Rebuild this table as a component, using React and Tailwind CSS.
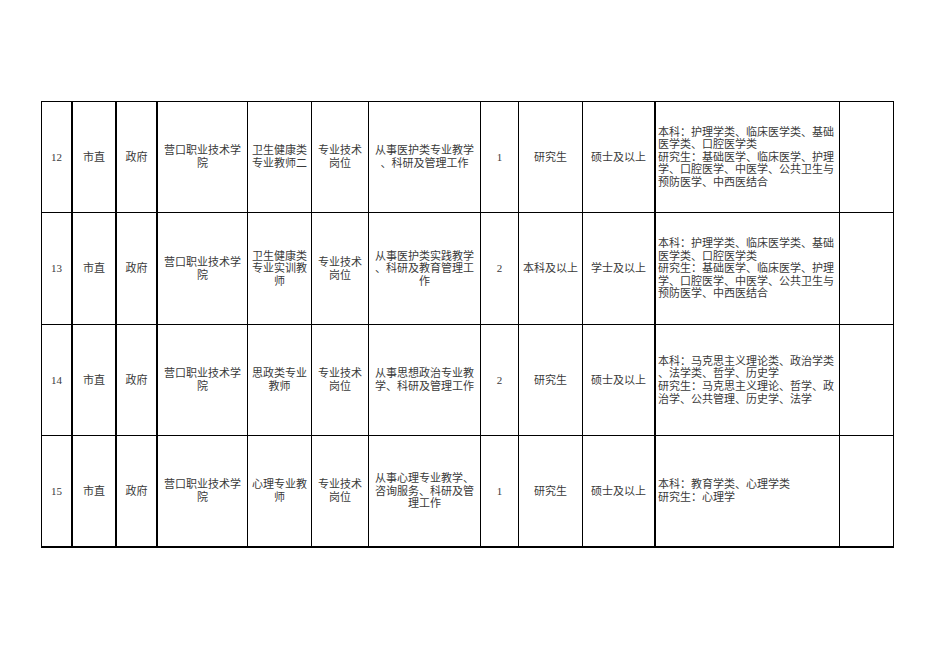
import React from 'react';

const rows = [
  {
    no: '12',
    num: '1',
    cols: [
      ['卫生健康类', '专业教师二'],
      ['从事医护类专业教学', '、科研及管理工作'],
    ],
    edu: ['研究生'],
    deg: ['硕士及以上'],
    major: [
      '本科：护理学类、临床医学类、基础',
      '医学类、口腔医学类',
      '研究生：基础医学、临床医学、护理',
      '学、口腔医学、中医学、公共卫生与',
      '预防医学、中西医结合',
    ],
  },
  {
    no: '13',
    num: '2',
    cols: [
      ['卫生健康类', '专业实训教', '师'],
      ['从事医护类实践教学', '、科研及教育管理工', '作'],
    ],
    edu: ['本科及以上'],
    deg: ['学士及以上'],
    major: [
      '本科：护理学类、临床医学类、基础',
      '医学类、口腔医学类',
      '研究生：基础医学、临床医学、护理',
      '学、口腔医学、中医学、公共卫生与',
      '预防医学、中西医结合',
    ],
  },
  {
    no: '14',
    num: '2',
    cols: [
      ['思政类专业', '教师'],
      ['从事思想政治专业教', '学、科研及管理工作'],
    ],
    edu: ['研究生'],
    deg: ['硕士及以上'],
    major: [
      '本科：马克思主义理论类、政治学类',
      '、法学类、哲学、历史学',
      '研究生：马克思主义理论、哲学、政',
      '治学、公共管理、历史学、法学',
    ],
  },
  {
    no: '15',
    num: '1',
    cols: [
      ['心理专业教', '师'],
      ['从事心理专业教学、', '咨询服务、科研及管', '理工作'],
    ],
    edu: ['研究生'],
    deg: ['硕士及以上'],
    major: ['本科：教育学类、心理学类', '研究生：心理学'],
  },
];

function Lines({ lines }) {
  return lines.map((l, i) => (
    <div key={i} className="whitespace-nowrap">
      {l}
    </div>
  ));
}

function Cell({ children, thick, left, last }) {
  return (
    <div
      className={
        'flex flex-col justify-center border-black ' +
        (thick ? 'border-r-2 ' : 'border-r ') +
        (last ? 'border-b-2 ' : 'border-b ') +
        (left ? 'items-start pl-[2px] text-left' : 'items-center text-center')
      }
    >
      {children}
    </div>
  );
}

export default function App() {
  return (
    <div
      className="w-[936px] h-[662px] bg-white pl-[41px] pt-[101px] text-[11px] leading-[12.6px] text-[#3a3a3a]"
      style={{ fontFamily: '"Liberation Serif", "Noto Sans CJK SC", serif' }}
    >
      <div className="grid w-[853px] grid-cols-[31px_44px_41px_90px_64px_57px_112px_38px_64px_73px_184px_54px] grid-rows-[111px_112px_111px_112px] border-l border-t border-black">
        {rows.map((r, i) => {
          const last = i === rows.length - 1;
          return (
            <React.Fragment key={r.no}>
              <Cell thick last={last}>{r.no}</Cell>
              <Cell thick last={last}>市直</Cell>
              <Cell thick last={last}>政府</Cell>
              <Cell last={last}>
                <Lines lines={['营口职业技术学', '院']} />
              </Cell>
              <Cell last={last}>
                <Lines lines={r.cols[0]} />
              </Cell>
              <Cell last={last}>
                <Lines lines={['专业技术', '岗位']} />
              </Cell>
              <Cell last={last}>
                <Lines lines={r.cols[1]} />
              </Cell>
              <Cell last={last}>{r.num}</Cell>
              <Cell last={last}>
                <Lines lines={r.edu} />
              </Cell>
              <Cell thick last={last}>
                <Lines lines={r.deg} />
              </Cell>
              <Cell left last={last}>
                <Lines lines={r.major} />
              </Cell>
              <Cell last={last}></Cell>
            </React.Fragment>
          );
        })}
      </div>
    </div>
  );
}
